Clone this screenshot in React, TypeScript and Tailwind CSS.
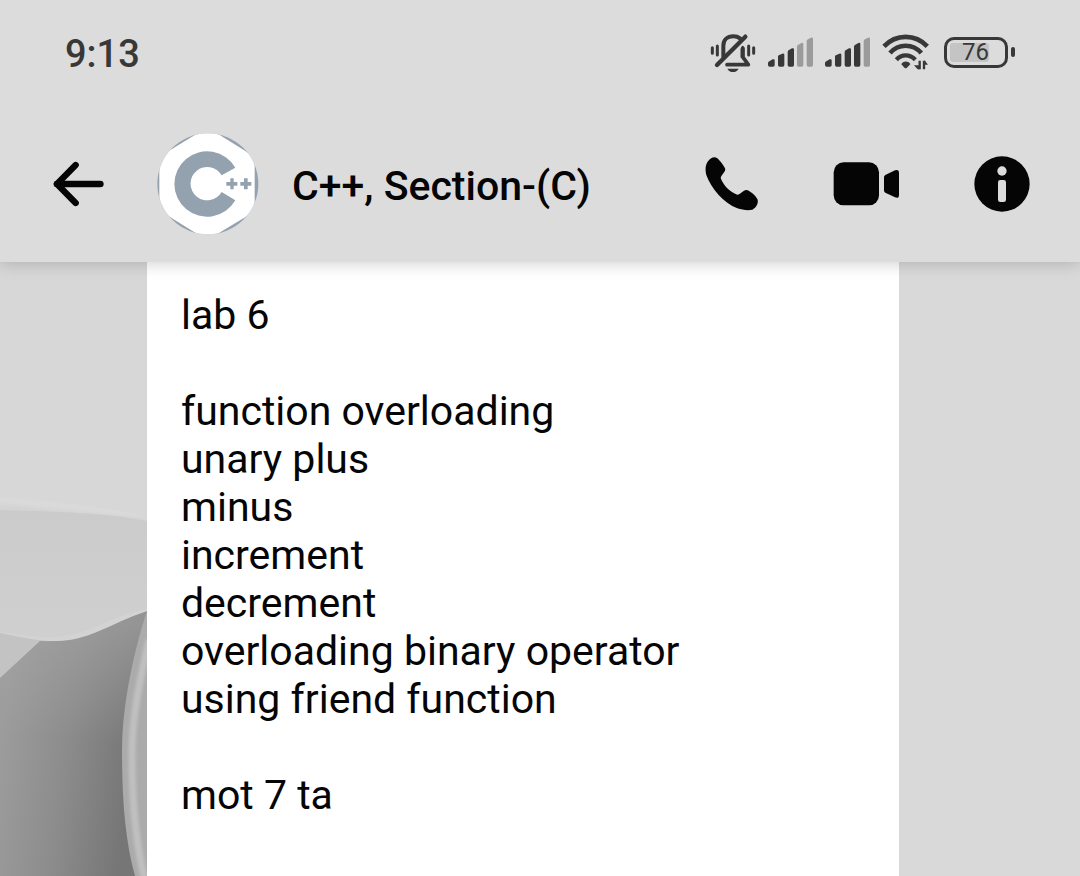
import React from "react";

const messageLines: string[] = [
  "lab 6",
  "",
  "function overloading",
  "unary plus",
  "minus",
  "increment",
  "decrement",
  "overloading binary operator",
  "using friend function",
  "",
  "mot 7 ta",
];

function MutedBell() {
  return (
    <svg aria-hidden="true" className="h-[39px] w-[46px] shrink-0" viewBox="27 36 138 117" fill="none" stroke="#383838" strokeLinecap="round" strokeLinejoin="round">
      <path d="M67 107V74C67 56 79 46 97 46C105 46 112 48 117 52" strokeWidth="12" />
      <path d="M48 132L133 47" strokeWidth="13" />
      <path d="M126 82V109L142 131H78" strokeWidth="11" />
      <path d="M125 78L122 84V108" strokeWidth="7" />
      <path d="M79 143H113C109 150 104 153 96 153S83 150 79 143Z" fill="#383838" stroke="none" />
      <path d="M34 80V97M49 75V102M143 75V102M158 80V97" strokeWidth="9" />
    </svg>
  );
}

function SignalBars({ strength }: { strength: number }) {
  const bars = [
    "M204 129Q204 126 208 124L218 118Q224 116 224 121V135Q224 140 219 140H209Q204 140 204 135Z",
    "M234 109Q234 106 238 105L247 101Q253 100 253 104V135Q253 140 248 140H239Q234 140 234 135Z",
    "M263 96Q263 92 267 90L276 85Q282 83 282 88V135Q282 140 277 140H268Q263 140 263 135Z",
    "M291 80Q291 76 295 74L304 69Q310 67 310 72V135Q310 140 305 140H296Q291 140 291 135Z",
    "M320 64Q320 60 324 58L333 53Q339 51 339 56V135Q339 140 334 140H325Q320 140 320 135Z",
  ];
  return (
    <svg aria-hidden="true" className="h-[30px] w-[45px] shrink-0" viewBox="204 51 135 90">
      {bars.map((d, i) => (
        <path key={i} d={d} fill={i < strength ? "#383838" : "#9b9b9b"} />
      ))}
    </svg>
  );
}

function Wifi() {
  return (
    <svg aria-hidden="true" className="h-[37px] w-[47px] shrink-0" viewBox="36 42 141 111" fill="none" stroke="#383838">
      <path d="M42 79C78 41 136 41 172 79" strokeWidth="14" />
      <path d="M60 99C86 70 128 70 154 99" strokeWidth="14" />
      <path d="M79 119C95 102 119 102 136 119" strokeWidth="13" />
      <path d="M94 133C98 122 117 122 121 133L110 144Q107 146 104 144Z" fill="#383838" stroke="none" />
      <path d="M149 122V148M162 122V148" strokeWidth="7" />
      <path d="M132 136H149V148H143ZM162 122H165L174 134H162Z" fill="#383838" stroke="none" />
    </svg>
  );
}

function Battery({ level }: { level: number }) {
  return (
    <div className="flex shrink-0 items-center gap-[3px]">
      <div className="flex h-[31px] w-[64px] rounded-[10px] border-[3px] border-[#383838] p-[3px]">
        <div className="flex h-full w-[39px] items-center justify-end rounded-[3px] bg-[#c4c4c4] text-[24px] leading-none text-[#383838]">
          {level}
        </div>
      </div>
      <div className="h-[10px] w-[4px] rounded-[2px] bg-[#383838]" />
    </div>
  );
}

function BackArrow() {
  return (
    <svg aria-hidden="true" className="h-[46px] w-[52px]" viewBox="40 123 156 138" fill="none" stroke="#050505" strokeLinecap="round" strokeLinejoin="round">
      <path d="M108 135L52 192L108 249" strokeWidth="19" />
      <path d="M52 192H182" strokeWidth="20" />
      <path d="M46 192L66 172V212Z" fill="#050505" strokeWidth="6" />
    </svg>
  );
}

function GroupAvatar() {
  return (
    <svg role="img" aria-label="Group photo" className="h-[102px] w-[102px] shrink-0" viewBox="350 38 306 306">
      <defs>
        <clipPath id="avatar">
          <circle cx="502.500" cy="190.500" r="151.500" />
        </clipPath>
      </defs>
      <g clipPath="url(#avatar)">
        <path d="M350 38H656V344H350Z" fill="#94a2af" />
        <path d="M357 110L390 89L465 43Q501 25 537 43L614 91L643 112V269L614 291L537 337Q501 355 465 337L390 291L357 269Z" fill="#fff" />
        <path d="M585 142A98 98 0 1 0 585 240L544 215A50 50 0 1 1 544 165Z" fill="#94a2af" />
        <path d="M570 174H580V185H591V196H580V207H570V196H558V185H570ZM611 174H622V185H633V196H622V207H611V196H600V185H611Z" fill="#94a2af" />
      </g>
    </svg>
  );
}

function Phone() {
  return (
    <svg aria-hidden="true" className="h-[54px] w-[54px]" viewBox="46 51 162 162" fill="#050505">
      <path d="M55 64C61 56 68 52 74 52C80 52 84 55 88 60C96 68 102 77 106 85C110 95 96 102 93 114C101 136 121 157 143 164C155 163 160 149 171 150C184 154 196 165 203 177C208 189 200 203 188 209C175 212 158 210 143 205C102 189 64 145 50 105C47 91 46 76 55 64Z" />
    </svg>
  );
}

function VideoCamera() {
  return (
    <svg aria-hidden="true" className="h-[44px] w-[67px]" viewBox="431 66 201 132" fill="#050505">
      <rect x="433" y="67" width="136" height="129" rx="30" />
      <path d="M588 105L617 91Q629 87 629 99V165Q629 177 617 172L588 158Q584 156 584 151V112Q584 107 588 105Z" />
    </svg>
  );
}

function Info() {
  return (
    <svg aria-hidden="true" className="h-[56px] w-[56px]" viewBox="852 48 168 168">
      <circle cx="936" cy="132" r="83" fill="#050505" />
      <circle cx="936" cy="93" r="14" fill="#dcdcdc" />
      <rect x="924" y="120" width="24" height="66" rx="7" fill="#dcdcdc" />
    </svg>
  );
}

function Wallpaper() {
  return (
    <svg aria-hidden="true" className="absolute top-0 left-0 h-[614px] w-[147px]" viewBox="0 262 147 614" preserveAspectRatio="none">
      <defs>
        <linearGradient id="fold" x1="0" y1="0" x2="0" y2="1">
          <stop offset="0" stopColor="#cbcbcb" />
          <stop offset="0.4" stopColor="#d0d0d0" />
        </linearGradient>
        <linearGradient id="ridge" gradientUnits="userSpaceOnUse" x1="75" y1="494" x2="73" y2="514">
          <stop offset="0" stopColor="#d7d7d7" />
          <stop offset="0.7" stopColor="#dadada" />
          <stop offset="1" stopColor="#d3d3d3" />
        </linearGradient>
        <linearGradient id="shade" gradientUnits="userSpaceOnUse" x1="0" y1="745" x2="132" y2="762">
          <stop offset="0" stopColor="#9c9c9c" />
          <stop offset="0.5" stopColor="#8c8c8c" />
          <stop offset="1" stopColor="#767676" />
        </linearGradient>
        <linearGradient id="haze" gradientUnits="userSpaceOnUse" x1="100" y1="620" x2="90" y2="740">
          <stop offset="0" stopColor="#a6a6a6" stopOpacity="0.6" />
          <stop offset="1" stopColor="#a6a6a6" stopOpacity="0" />
        </linearGradient>
        <clipPath id="petalEdge">
          <path d="M147 611C134 650 122 705 122 750C122 800 125 840 135 876H147Z" />
        </clipPath>
        <filter id="soft" x="-100%" y="-10%" width="300%" height="120%">
          <feGaussianBlur stdDeviation="1.500" />
        </filter>
      </defs>
      <path d="M0 262H147V876H0Z" fill="#d7d7d7" />
      <path d="M0 497C60 502 110 507 147 517V521C110 513 50 511 0 510Z" fill="url(#ridge)" />
      <path d="M0 510C50 511 110 513 147 521V876H0Z" fill="url(#fold)" />
      <path d="M0 632C20 637 38 641 55 641H40L0 678Z" fill="#c3c3c3" />
      <path d="M0 678L40 641C90 643 105 625 147 611V876H0Z" fill="url(#shade)" />
      <path d="M0 678L40 641C90 643 105 625 147 611V760H0Z" fill="url(#haze)" />
      <path d="M0 632C20 634 38 638 55 637C90 635 104 618 147 609V611C105 625 90 641 55 641C38 641 20 637 0 633Z" fill="#d3d3d3" />
      <g clipPath="url(#petalEdge)">
        <path d="M120 600H147V876H120Z" fill="#ababab" />
        <path d="M149 640C140 680 132 715 132 755C132 800 136 845 145 880" fill="none" stroke="#c0c0c0" strokeWidth="7" filter="url(#soft)" />
      </g>
    </svg>
  );
}

export default function App() {
  return (
    <div className="flex min-h-screen flex-col bg-[#d9d9d9] font-[Roboto,sans-serif]">
      <header className="relative z-10 bg-[#dcdcdc] shadow-[0_1px_16px_rgba(0,0,0,0.2)]">
        <div className="flex h-[104px] items-center justify-between pr-[65px] pl-[65px]">
          <time className="pt-1 text-[38px] leading-[48px] font-medium text-[#383838]">9:13</time>
          <div className="flex items-center gap-[12px]">
            <MutedBell />
            <SignalBars strength={3} />
            <SignalBars strength={4} />
            <Wifi />
            <div className="pl-[3px]">
              <Battery level={76} />
            </div>
          </div>
        </div>
        <div className="flex h-[158px] items-center pt-[2px] pr-[50px] pl-[53px]">
          <button type="button" aria-label="Back" className="shrink-0">
            <BackArrow />
          </button>
          <div className="ml-[52px] flex min-w-0 flex-1 items-center gap-[33px]">
            <GroupAvatar />
            <h1 className="truncate pt-1 text-[41px] leading-[52px] font-medium text-[#050505]">C++, Section-(C)</h1>
          </div>
          <div className="flex shrink-0 items-center gap-[74px]">
            <button type="button" aria-label="Audio call">
              <Phone />
            </button>
            <button type="button" aria-label="Video call">
              <VideoCamera />
            </button>
            <button type="button" aria-label="Conversation details">
              <Info />
            </button>
          </div>
        </div>
      </header>
      <main className="relative flex flex-1">
        <Wallpaper />
        <article className="relative mr-[181px] ml-[147px] flex-1 bg-white px-[34px] pt-[29px] pb-[48px] text-[41px] leading-[48px] text-[#050505]">
          {messageLines.map((line, i) => (
            <p key={i} className="min-h-[48px]">
              {line}
            </p>
          ))}
        </article>
      </main>
    </div>
  );
}
